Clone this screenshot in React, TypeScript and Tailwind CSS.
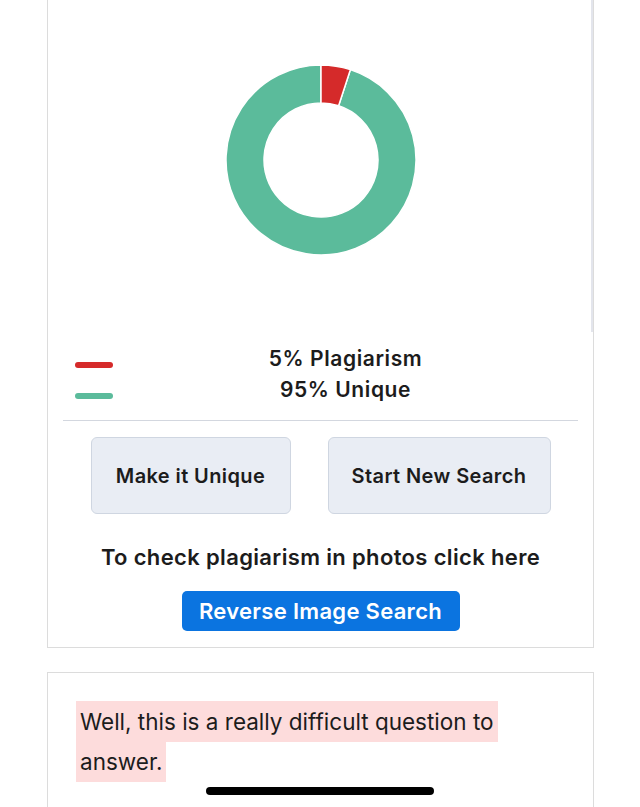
import React from 'react';

const RED = '#d52a2a';
const GREEN = '#5bbb9b';

// point on a circle, angle in degrees clockwise from 12 o'clock
const pt = (cx: number, cy: number, r: number, deg: number) => {
  const a = ((deg - 90) * Math.PI) / 180;
  return [cx + r * Math.cos(a), cy + r * Math.sin(a)];
};

const arc = (cx: number, cy: number, ro: number, ri: number, from: number, to: number) => {
  const large = to - from > 180 ? 1 : 0;
  const [x1, y1] = pt(cx, cy, ro, from);
  const [x2, y2] = pt(cx, cy, ro, to);
  const [x3, y3] = pt(cx, cy, ri, to);
  const [x4, y4] = pt(cx, cy, ri, from);
  return `M${x1} ${y1} A${ro} ${ro} 0 ${large} 1 ${x2} ${y2} L${x3} ${y3} A${ri} ${ri} 0 ${large} 0 ${x4} ${y4} Z`;
};

const Donut = ({ plagiarism }: { plagiarism: number }) => {
  const cut = (plagiarism / 100) * 360;
  return (
    <svg width="200" height="200" viewBox="0 0 200 200">
      <path d={arc(100, 100, 95, 57, cut, 360)} fill={GREEN} stroke="#fff" strokeWidth="1.5" />
      <path d={arc(100, 100, 95, 57, 0, cut)} fill={RED} stroke="#fff" strokeWidth="1.5" />
    </svg>
  );
};

export default function App() {
  return (
    <div className="min-h-[807px] bg-white text-[#1c1c1c]" style={{ fontFamily: 'Inter, "Noto Sans", sans-serif' }}>
      <div className="ml-[47px] w-[547px] border border-t-0 border-[#dcdcdc] px-[15px] pb-[16px]">
        <div className="-mx-[15px] flex h-[332px] justify-center border-r-2 border-[#e3e5ec] pl-[2px] pt-[60px]">
          <Donut plagiarism={5} />
        </div>

        <div className="flex pb-[15px] pt-[11px]">
          <div className="flex w-[50px] flex-col gap-[25px] pl-[12px] pt-[19px]">
            <span className="block h-[6px] w-[38px] rounded-full" style={{ background: RED }} />
            <span className="block h-[6px] w-[38px] rounded-full" style={{ background: GREEN }} />
          </div>
          <div className="flex-1 text-center text-[21px] font-semibold leading-[31px] tracking-[0.6px]">
            <p>5% Plagiarism</p>
            <p>95% Unique</p>
          </div>
        </div>

        <div className="border-t border-[#d3d7df]" />

        <div className="mt-[16px] flex justify-center gap-[37px]">
          <button className="h-[77px] w-[200px] rounded-md border border-[#cfd6e1] bg-[#e9edf4] text-[20px] font-semibold tracking-[0.4px]">
            Make it Unique
          </button>
          <button className="h-[77px] w-[223px] rounded-md border border-[#cfd6e1] bg-[#e9edf4] text-[20px] font-semibold tracking-[0.4px]">
            Start New Search
          </button>
        </div>

        <p className="mt-[29px] text-center text-[22px] font-semibold leading-[28px] tracking-[0.35px]">
          To check plagiarism in photos click here
        </p>

        <div className="mt-[20px] flex justify-center">
          <button className="h-[40px] w-[278px] rounded-[5px] bg-[#0b74e0] text-[22px] font-semibold tracking-[0.3px] text-white">
            Reverse Image Search
          </button>
        </div>
      </div>

      <div className="ml-[47px] mt-[24px] h-[140px] w-[547px] border border-b-0 border-[#dcdcdc] pl-[28px] pt-[29px]">
        <p className="w-[440px] text-[22.5px] leading-[40px]">
          <span className="box-decoration-clone bg-[#fddcdc] px-[4px] py-[7px]">Well, this is a really difficult question to answer.</span>
        </p>
      </div>

      <div className="fixed bottom-[12px] left-[206px] h-[8px] w-[228px] rounded-full bg-black" />
    </div>
  );
}
